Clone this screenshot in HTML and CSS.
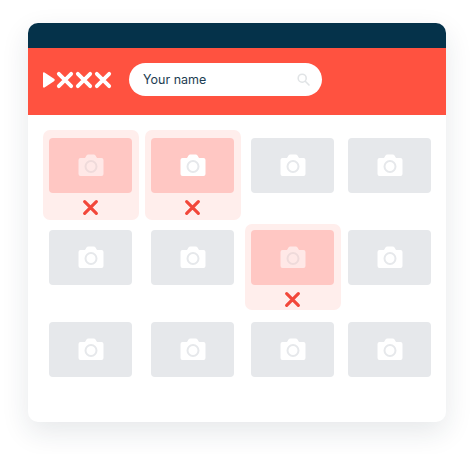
FILE: index.html
```html
<!DOCTYPE html>
<html lang="en">
<head>
  <meta charset="UTF-8">
  <meta name="viewport" content="width=device-width, initial-scale=1.0">
  <title>Photo review</title>
  <link rel="stylesheet" href="styles.css">
</head>
<body>
  <svg class="defs" width="0" height="0">
    <symbol id="camera" viewBox="0 0 26 24">
      <path class="camera-body" d="M2.500 5h4.500l1.500-2.500q.6-1 1.800-1h5.400q1.200 0 1.800 1l1.500 2.500h4.500q2 0 2 2v14q0 2-2 2h-21q-2 0-2-2v-14q0-2 2-2z"/>
      <circle class="camera-lens" cx="13" cy="13.500" r="5.500"/>
    </symbol>
    <symbol id="cross" viewBox="0 0 16 16">
      <path d="M2.500 2.500l11 11M13.500 2.500l-11 11"/>
    </symbol>
  </svg>

  <div class="window">
    <div class="topbar"></div>
    <div class="header">
      <div class="logo">
        <svg class="logo-play" viewBox="0 0 12 16"><path d="M1.500 0.500l9.500 6.300q1.500 1.200 0 2.400l-9.500 6.300q-1.500.6-1.500-1v-13q0-1.600 1.500-1z"/></svg>
        <svg class="logo-x"><use href="#cross"/></svg>
        <svg class="logo-x"><use href="#cross"/></svg>
        <svg class="logo-x"><use href="#cross"/></svg>
      </div>
      <div class="search">
        <span class="search-text">Your name</span>
        <svg class="search-icon" viewBox="0 0 13 13"><circle cx="5.200" cy="5.200" r="4"/><path d="M8.300 8.300l3.700 3.700"/></svg>
      </div>
    </div>
    <div class="grid">
      <div class="cell rejected dim"><div class="tile"><svg class="camera"><use href="#camera"/></svg></div><svg class="mark"><use href="#cross"/></svg></div>
      <div class="cell rejected"><div class="tile"><svg class="camera"><use href="#camera"/></svg></div><svg class="mark"><use href="#cross"/></svg></div>
      <div class="cell"><div class="tile"><svg class="camera"><use href="#camera"/></svg></div></div>
      <div class="cell"><div class="tile"><svg class="camera"><use href="#camera"/></svg></div></div>

      <div class="cell"><div class="tile"><svg class="camera"><use href="#camera"/></svg></div></div>
      <div class="cell"><div class="tile"><svg class="camera"><use href="#camera"/></svg></div></div>
      <div class="cell rejected dim short"><div class="tile"><svg class="camera"><use href="#camera"/></svg></div><svg class="mark"><use href="#cross"/></svg></div>
      <div class="cell"><div class="tile"><svg class="camera"><use href="#camera"/></svg></div></div>

      <div class="cell"><div class="tile"><svg class="camera"><use href="#camera"/></svg></div></div>
      <div class="cell"><div class="tile"><svg class="camera"><use href="#camera"/></svg></div></div>
      <div class="cell"><div class="tile"><svg class="camera"><use href="#camera"/></svg></div></div>
      <div class="cell"><div class="tile"><svg class="camera"><use href="#camera"/></svg></div></div>
    </div>
  </div>
</body>
</html>
```

FILE: styles.css
```css
html {
  height: 100%;
}
body {
  margin: 0;
  min-height: 454px;
  overflow: hidden;
  background: #fff;
  font-family: Inter, "Noto Sans", sans-serif;
}
.defs {
  position: absolute;
}
.window {
  width: 418px;
  height: 399px;
  margin: 23px 0 0 28px;
  background: #fff;
  border-radius: 10px;
  box-shadow: 0 10px 28px rgba(30, 45, 60, 0.11);
  overflow: hidden;
}
.topbar {
  height: 25px;
  background: #05324a;
}
.header {
  display: flex;
  align-items: center;
  height: 63px;
  padding: 0 0 4px 15px;
  background: #ff5240;
}
.logo {
  display: flex;
  align-items: center;
  gap: 1px;
  width: 86px;
}
.logo-play {
  width: 12px;
  height: 16px;
  fill: #fff;
}
.logo-x {
  width: 18px;
  height: 18px;
  fill: none;
  stroke: #fff;
  stroke-width: 3.400;
  stroke-linecap: round;
}
.search {
  display: flex;
  align-items: center;
  justify-content: space-between;
  width: 193px;
  height: 33px;
  box-sizing: border-box;
  padding: 0 12px 0 14px;
  background: #fff;
  border-radius: 17px;
}
.search-text {
  font-size: 12.500px;
  color: #1d3d52;
}
.search-icon {
  width: 13px;
  height: 13px;
  fill: none;
  stroke: #e1e4e6;
  stroke-width: 1.600;
  stroke-linecap: round;
}
.grid {
  display: grid;
  grid-template-columns: 102px 100px 97px 83px;
  grid-auto-rows: 92px;
  padding: 23px 0 0 21px;
}
.cell {
  position: relative;
  width: 83px;
}
.tile {
  position: relative;
  display: flex;
  align-items: center;
  justify-content: center;
  height: 55px;
  background: #e6e8eb;
  border-radius: 4px;
}
.camera {
  width: 26px;
  height: 24px;
  margin-bottom: 1px;
}
.camera-body {
  fill: #fff;
}
.camera-lens {
  fill: none;
  stroke: #e6e8eb;
  stroke-width: 2;
}
.rejected::before {
  content: "";
  position: absolute;
  top: -8px;
  left: -6px;
  width: 96px;
  height: 90px;
  background: #ffeeec;
  border-radius: 7px;
}
.short::before {
  top: -6px;
  height: 86px;
}
.rejected .tile {
  background: #ffc7c3;
}
.rejected .camera-lens {
  stroke: #ffc7c3;
}
.dim .camera {
  opacity: 0.6;
}
.mark {
  position: absolute;
  top: 61px;
  left: 33px;
  width: 17px;
  height: 17px;
  fill: none;
  stroke: #f2473a;
  stroke-width: 3;
  stroke-linecap: round;
}
```
